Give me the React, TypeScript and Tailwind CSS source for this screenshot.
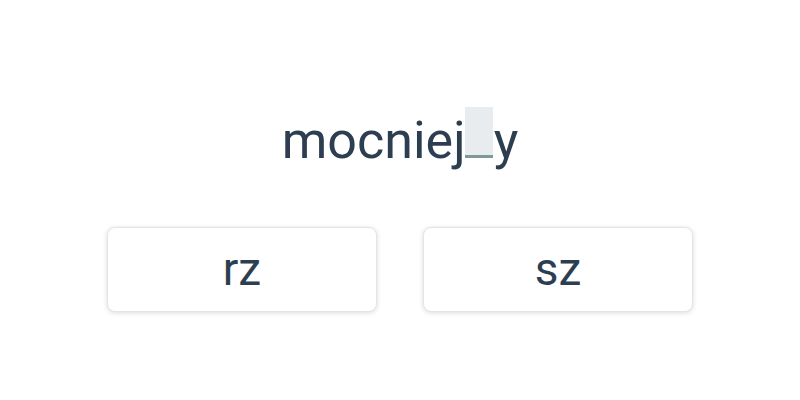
import React from 'react';

const options = ['rz', 'sz'];

const App = () => {
  return (
    <div
      className="w-[800px] h-[400px] bg-white flex flex-col items-center text-[#2c3e50]"
      style={{ fontFamily: 'Roboto, "Noto Sans", sans-serif' }}
    >
      {/* word with the missing letters */}
      <div className="mt-[107px] h-[51px] flex items-baseline text-[52px] leading-none">
        <span>mocniej</span>
        <span className="w-[28px] h-[51px] ml-[-1px] bg-[#e9ecef] border-b-[3px] border-[#7f9a94] mb-[-1px]"></span>
        <span className="ml-[1px]">y</span>
      </div>

      <div className="mt-[69px] flex gap-[46px]">
        {options.map((o) => (
          <button
            key={o}
            className="w-[270px] h-[85px] rounded-lg border border-[#e2e5e8] bg-white shadow-[0_1px_5px_rgba(0,0,0,0.14)] text-[46px] text-[#2c3e50] flex items-center justify-center"
          >
            {o}
          </button>
        ))}
      </div>
    </div>
  );
};

export default App;
